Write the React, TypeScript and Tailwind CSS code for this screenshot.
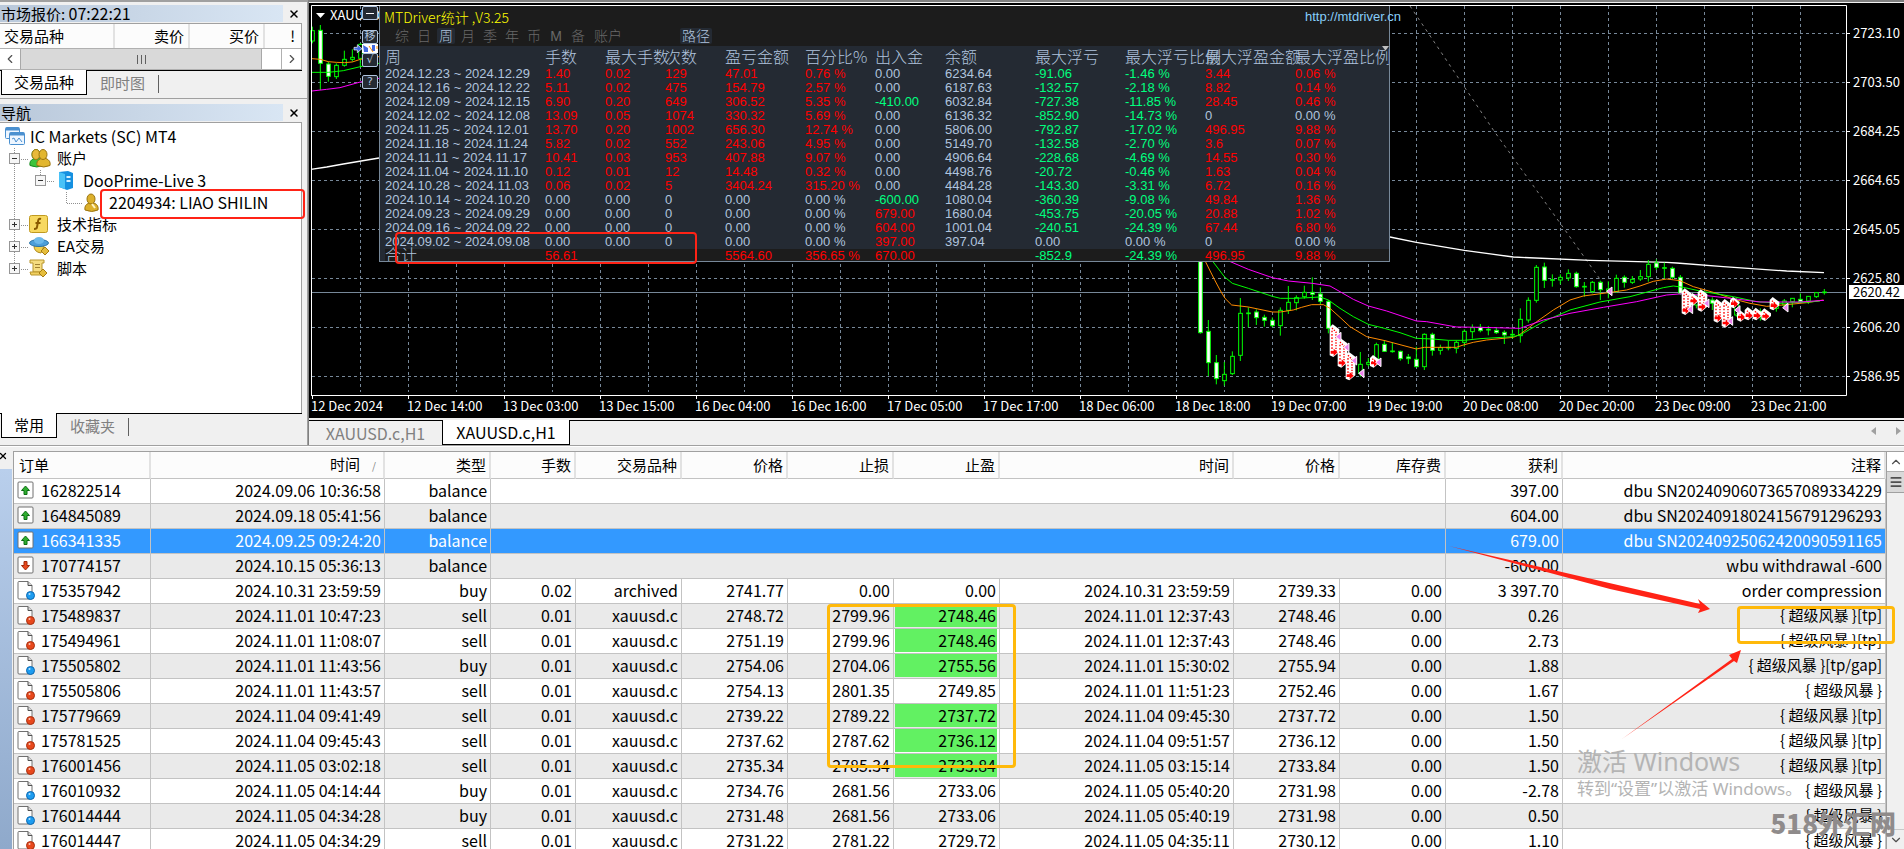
import { clsx } from 'clsx';
import { ChevronDown, ChevronLeft, ChevronRight, ChevronUp, Menu, X } from 'lucide-react';
import type { ReactNode } from 'react';

/* ---------- data ---------- */

const STAT_TABS = ['综', '日', '周', '月', '季', '年', '币', 'M', '备'];

const STAT_HEADERS = [
  '周', '手数', '最大手数', '次数', '盈亏金额', '百分比%', '出入金', '余额',
  '最大浮亏', '最大浮亏比例', '最大浮盈金额', '最大浮盈比例',
];

const STAT_ROWS = [
  ['2024.12.23 ~ 2024.12.29', '1.40', '0.02', '129', '47.01', '0.76 %', '0.00', '6234.64', '-91.06', '-1.46 %', '3.44', '0.06 %'],
  ['2024.12.16 ~ 2024.12.22', '5.11', '0.02', '475', '154.79', '2.57 %', '0.00', '6187.63', '-132.57', '-2.18 %', '8.82', '0.14 %'],
  ['2024.12.09 ~ 2024.12.15', '6.90', '0.20', '649', '306.52', '5.35 %', '-410.00', '6032.84', '-727.38', '-11.85 %', '28.45', '0.46 %'],
  ['2024.12.02 ~ 2024.12.08', '13.09', '0.05', '1074', '330.32', '5.69 %', '0.00', '6136.32', '-852.90', '-14.73 %', '0', '0.00 %'],
  ['2024.11.25 ~ 2024.12.01', '13.70', '0.20', '1002', '656.30', '12.74 %', '0.00', '5806.00', '-792.87', '-17.02 %', '496.95', '9.88 %'],
  ['2024.11.18 ~ 2024.11.24', '5.82', '0.02', '552', '243.06', '4.95 %', '0.00', '5149.70', '-132.58', '-2.70 %', '3.6', '0.07 %'],
  ['2024.11.11 ~ 2024.11.17', '10.41', '0.03', '953', '407.88', '9.07 %', '0.00', '4906.64', '-228.68', '-4.69 %', '14.55', '0.30 %'],
  ['2024.11.04 ~ 2024.11.10', '0.12', '0.01', '12', '14.48', '0.32 %', '0.00', '4498.76', '-20.72', '-0.46 %', '1.63', '0.04 %'],
  ['2024.10.28 ~ 2024.11.03', '0.06', '0.02', '5', '3404.24', '315.20 %', '0.00', '4484.28', '-143.30', '-3.31 %', '6.72', '0.16 %'],
  ['2024.10.14 ~ 2024.10.20', '0.00', '0.00', '0', '0.00', '0.00 %', '-600.00', '1080.04', '-360.39', '-9.08 %', '49.84', '1.36 %'],
  ['2024.09.23 ~ 2024.09.29', '0.00', '0.00', '0', '0.00', '0.00 %', '679.00', '1680.04', '-453.75', '-20.05 %', '20.88', '1.02 %'],
  ['2024.09.16 ~ 2024.09.22', '0.00', '0.00', '0', '0.00', '0.00 %', '604.00', '1001.04', '-240.51', '-24.39 %', '67.44', '6.80 %'],
  ['2024.09.02 ~ 2024.09.08', '0.00', '0.00', '0', '0.00', '0.00 %', '397.00', '397.04', '0.00', '0.00 %', '0', '0.00 %'],
];

const STAT_TOTAL = ['合计', '56.61', '', '', '5564.60', '356.65 %', '670.00', '', '-852.9', '-24.39 %', '496.95', '9.88 %'];

const ORDER_HEADERS = ['时间', '类型', '手数', '交易品种', '价格', '止损', '止盈', '时间', '价格', '库存费', '获利', '注释'];

interface Order {
  id: string;
  time: string;
  type: string;
  // lots, symbol, price, s/l, t/p, close time, close price, swap
  deal?: string[];
  profit: string;
  comment: string;
  hit?: boolean;
  selected?: boolean;
}

const ORDERS: Order[] = [
  { id: '162822514', time: '2024.09.06 10:36:58', type: 'balance', profit: '397.00', comment: 'dbu SN20240906073657089334229' },
  { id: '164845089', time: '2024.09.18 05:41:56', type: 'balance', profit: '604.00', comment: 'dbu SN20240918024156791296293' },
  { id: '166341335', time: '2024.09.25 09:24:20', type: 'balance', profit: '679.00', comment: 'dbu SN20240925062420090591165', selected: true },
  { id: '170774157', time: '2024.10.15 05:36:13', type: 'balance', profit: '-600.00', comment: 'wbu withdrawal -600' },
  { id: '175357942', time: '2024.10.31 23:59:59', type: 'buy', deal: ['0.02', 'archived', '2741.77', '0.00', '0.00', '2024.10.31 23:59:59', '2739.33', '0.00'], profit: '3 397.70', comment: 'order compression' },
  { id: '175489837', time: '2024.11.01 10:47:23', type: 'sell', deal: ['0.01', 'xauusd.c', '2748.72', '2799.96', '2748.46', '2024.11.01 12:37:43', '2748.46', '0.00'], profit: '0.26', comment: '{ 超级风暴 }[tp]', hit: true },
  { id: '175494961', time: '2024.11.01 11:08:07', type: 'sell', deal: ['0.01', 'xauusd.c', '2751.19', '2799.96', '2748.46', '2024.11.01 12:37:43', '2748.46', '0.00'], profit: '2.73', comment: '{ 超级风暴 }[tp]', hit: true },
  { id: '175505802', time: '2024.11.01 11:43:56', type: 'buy', deal: ['0.01', 'xauusd.c', '2754.06', '2704.06', '2755.56', '2024.11.01 15:30:02', '2755.94', '0.00'], profit: '1.88', comment: '{ 超级风暴 }[tp/gap]', hit: true },
  { id: '175505806', time: '2024.11.01 11:43:57', type: 'sell', deal: ['0.01', 'xauusd.c', '2754.13', '2801.35', '2749.85', '2024.11.01 11:51:23', '2752.46', '0.00'], profit: '1.67', comment: '{ 超级风暴 }' },
  { id: '175779669', time: '2024.11.04 09:41:49', type: 'sell', deal: ['0.01', 'xauusd.c', '2739.22', '2789.22', '2737.72', '2024.11.04 09:45:30', '2737.72', '0.00'], profit: '1.50', comment: '{ 超级风暴 }[tp]', hit: true },
  { id: '175781525', time: '2024.11.04 09:45:43', type: 'sell', deal: ['0.01', 'xauusd.c', '2737.62', '2787.62', '2736.12', '2024.11.04 09:51:57', '2736.12', '0.00'], profit: '1.50', comment: '{ 超级风暴 }[tp]', hit: true },
  { id: '176001456', time: '2024.11.05 03:02:18', type: 'sell', deal: ['0.01', 'xauusd.c', '2735.34', '2785.34', '2733.84', '2024.11.05 03:15:14', '2733.84', '0.00'], profit: '1.50', comment: '{ 超级风暴 }[tp]', hit: true },
  { id: '176010932', time: '2024.11.05 04:14:44', type: 'buy', deal: ['0.01', 'xauusd.c', '2734.76', '2681.56', '2733.06', '2024.11.05 05:40:20', '2731.98', '0.00'], profit: '-2.78', comment: '{ 超级风暴 }' },
  { id: '176014444', time: '2024.11.05 04:34:28', type: 'buy', deal: ['0.01', 'xauusd.c', '2731.48', '2681.56', '2733.06', '2024.11.05 05:40:19', '2731.98', '0.00'], profit: '0.50', comment: '{ 超级风暴 }' },
  { id: '176014447', time: '2024.11.05 04:34:29', type: 'sell', deal: ['0.01', 'xauusd.c', '2731.22', '2781.22', '2729.72', '2024.11.05 04:35:11', '2730.12', '0.00'], profit: '1.10', comment: '{ 超级风暴 }' },
];

const DATES = [
  '12 Dec 2024', '12 Dec 14:00', '13 Dec 03:00', '13 Dec 15:00', '16 Dec 04:00', '16 Dec 16:00',
  '17 Dec 05:00', '17 Dec 17:00', '18 Dec 06:00', '18 Dec 18:00', '19 Dec 07:00', '19 Dec 19:00',
  '20 Dec 08:00', '20 Dec 20:00', '23 Dec 09:00', '23 Dec 21:00',
];

const PRICES = ['2723.10', '2703.50', '2684.25', '2664.65', '2645.05', '2625.80', '2606.20', '2586.95'];

// slot, high, low, body top, body bottom, falling (1 = white body)
type Candle = [number, number, number, number, number, number];

const CANDLES: Candle[] = [
  [0, 90, 341, 90, 338, 1], [1, 300, 468, 334, 428, 1], [2, 405, 493, 428, 476, 1], [3, 426, 497, 463, 482, 0],
  [4, 394, 465, 409, 461, 0], [5, 234, 423, 280, 406, 0], [6, 262, 322, 279, 281, 0], [7, 268, 315, 276, 293, 1],
  [8, 284, 320, 292, 301, 1], [9, 292, 322, 301, 317, 1], [10, 262, 347, 271, 317, 0], [11, 198, 282, 247, 271, 0],
  [12, 226, 271, 233, 248, 0], [13, 197, 236, 217, 230, 0], [14, 172, 240, 217, 223, 1], [15, 202, 255, 222, 244, 1],
  [16, 240, 340, 244, 325, 1], [20, 396, 470, 433, 460, 0], [21, 414, 440, 427, 433, 0], [22, 368, 430, 374, 420, 0],
  [23, 362, 396, 373, 394, 1], [24, 368, 398, 393, 395, 0], [25, 392, 422, 394, 416, 1], [26, 402, 432, 411, 416, 1],
  [27, 380, 442, 418, 440, 1], [28, 340, 450, 343, 440, 0], [29, 338, 407, 343, 391, 1], [30, 374, 404, 383, 391, 0],
  [31, 362, 391, 382, 384, 0], [32, 362, 400, 367, 385, 0], [33, 328, 380, 334, 367, 0], [34, 313, 356, 323, 335, 0],
  [35, 312, 337, 322, 332, 1], [36, 318, 346, 328, 330, 0], [37, 321, 342, 331, 338, 1], [38, 331, 372, 337, 345, 1],
  [39, 328, 356, 343, 345, 0], [40, 265, 368, 298, 347, 0], [41, 232, 308, 241, 300, 0], [42, 135, 248, 142, 241, 0],
  [43, 128, 204, 141, 181, 1], [44, 163, 200, 179, 181, 0], [45, 163, 193, 172, 180, 0], [46, 148, 183, 160, 174, 0],
  [47, 155, 203, 160, 200, 1], [48, 186, 230, 199, 201, 0], [49, 183, 220, 187, 215, 0], [50, 182, 240, 187, 209, 1],
  [51, 184, 235, 207, 215, 0], [52, 164, 218, 175, 215, 0], [53, 166, 203, 172, 187, 1], [54, 168, 192, 178, 187, 0],
  [55, 150, 183, 170, 177, 0], [56, 120, 185, 133, 170, 0], [57, 118, 150, 129, 142, 1], [58, 128, 175, 143, 145, 0],
  [59, 140, 177, 145, 172, 1], [60, 165, 225, 172, 220, 1], [62, 225, 265, 240, 255, 0], [64, 232, 270, 240, 250, 1],
  [67, 232, 290, 250, 285, 0], [70, 265, 302, 275, 290, 0], [72, 240, 275, 250, 265, 0], [73, 237, 262, 243, 255, 0],
  [74, 234, 262, 235, 245, 0], [75, 220, 250, 238, 245, 1], [76, 228, 252, 229, 243, 0], [77, 216, 234, 218, 230, 0],
  [78, 207, 224, 216, 218, 0],
];

const EARLY_CANDLES: Candle[] = [
  [-1, 80, 130, 92, 123, 0], [0, 75, 270, 91, 190, 1], [1, 185, 245, 192, 229, 1], [2, 190, 237, 196, 230, 0],
  [3, 152, 200, 178, 196, 0], [4, 148, 185, 172, 178, 0], [5, 130, 200, 133, 175, 0],
];

// x, top, bottom of a pile of entry arrows
const PILES = [
  [462, 316, 408], [486, 358, 440], [510, 398, 478], [583, 408, 440],
  [1518, 208, 282], [1541, 222, 254], [1566, 211, 272], [1614, 240, 305], [1638, 240, 320], [1663, 234, 262],
  [1684, 274, 302], [1707, 264, 298], [1731, 266, 298], [1757, 268, 300], [1782, 234, 268],
];

const EXITS = [
  [477, 350], [501, 382], [524, 422], [546, 460], [597, 427], [1532, 268], [1581, 250], [1652, 303], [1674, 270],
  [1818, 263], [1290, 214],
];

/* ---------- chart ---------- */

const CandleShape = ({ candle }: { candle: Candle }) => {
  const [slot, high, low, top, bottom, falling] = candle;
  const x = 61 + slot * 24;
  return (
    <g stroke="#00ff00" strokeWidth="3">
      <line x1={x} x2={x} y1={high} y2={low} />
      <rect x={x - 5} y={top} width="11" height={bottom - top} fill={falling ? '#fff' : '#000'} />
    </g>
  );
};

const Pile = ({ x, top, bottom }: { x: number; top: number; bottom: number }) => (
  <g>
    <path d={`M${x - 13} ${top + 6}L${x - 4} ${top - 3}L${x + 16} ${top + 12}L${x + 16} ${bottom - 12}L${x - 2} ${bottom + 3}L${x - 13} ${bottom - 2}Z`} fill="#fff" />
    <path d={`M${x - 6} ${top + 8}L${x + 6} ${top + 20}V${bottom - 14}`} stroke="#ff0000" strokeWidth="4" strokeDasharray="4 4" fill="none" />
    <path d={`M${x - 6} ${top + 16}V${bottom - 14}`} stroke="#ff0000" strokeWidth="4" strokeDasharray="5 5" />
    <path d={`M${x - 10} ${bottom - 15}h9v-7l12 11l-12 11v-7h-9z`} fill="#ff0000" />
  </g>
);

const PriceChart = () => (
  <svg className="block h-full w-full" viewBox="309 3 1595 416" preserveAspectRatio="xMinYMin slice" fontFamily="'Noto Sans CJK SC', sans-serif" fontSize="13">
    <g stroke="#778899" strokeDasharray="3 3" shapeRendering="crispEdges">
      {PRICES.map((price, i) => (
        <line key={price} x1="312" x2="1846" y1={33.5 + i * 49} y2={33.5 + i * 49} />
      ))}
      {Array.from({ length: 31 }, (_, i) => (
        <line key={i} x1={360.5 + i * 48} x2={360.5 + i * 48} y1="6" y2="392" />
      ))}
    </g>
    <line x1="312" x2="1846" y1="292.5" y2="292.5" stroke="#778899" />
    <path d="M1410 6L1494 131L1560 223L1602 282" stroke="#808080" strokeDasharray="3 4" fill="none" />

    <g transform="translate(300 0) scale(.33333)" fill="none" strokeWidth="3">
      {EARLY_CANDLES.map((candle) => (
        <CandleShape key={candle[0]} candle={candle} />
      ))}
      <path d="M36 176L61 178L85 185L109 187L133 188L157 186L181 178L237 170" stroke="#ff8c00" />
      <path d="M36 217L85 217L130 212L181 200L237 190" stroke="#00ff00" />
      <path d="M36 273L80 268L120 263L181 246L237 235" stroke="#ff00ff" />
      <path d="M33 508L80 501L130 492L237 474" stroke="#fff" strokeWidth="4" />
      <path d="M162 142h10v-8l14 12l-14 12v-8h-10z" fill="#4169e1" stroke="#fff" strokeWidth="2" />
    </g>

    <g transform="translate(1180 220) scale(.33333)" fill="none" strokeWidth="3">
      <path d="M630 51L709 67L853 91L1000 111L1230 121L1460 127L1490 129L1630 140L1820 153L1932 158" stroke="#fff" strokeWidth="4" />
      {CANDLES.map((candle) => (
        <CandleShape key={candle[0]} candle={candle} />
      ))}
      <path d="M72 116L103 178L120 210L135 235L155 255L205 261L277 276L301 276L340 270L365 262L395 254L430 254L450 265L480 292L510 320L560 350L615 362L660 374L709 387L733 382L829 382L850 375L880 367L920 360L1000 352L1020 343L1070 305L1120 270L1170 240L1210 228L1285 218L1340 210L1380 198L1420 184L1460 177L1500 182L1540 200L1600 217L1660 237L1710 250L1760 259L1820 254L1880 248L1930 240" stroke="#ff8c00" />
      <path d="M92 116L133 170L157 190L205 205L277 229L301 235L349 235L421 231L445 240L480 265L520 290L565 313L613 325L660 338L709 355L757 357L805 361L853 361L900 356L1000 350L1020 345L1090 305L1170 270L1260 246L1350 230L1450 203L1480 198L1510 202L1560 213L1660 230L1730 245L1800 250L1890 246L1920 243" stroke="#00ff00" />
      <path d="M130 116L205 148L277 173L325 183L397 190L450 198L480 215L520 238L565 258L620 273L709 303L740 305L829 321L900 322L1020 325L1090 300L1170 280L1270 262L1370 245L1460 225L1510 221L1580 227L1660 236L1740 246L1860 246L1932 241" stroke="#ff00ff" />
      {PILES.map(([x, top, bottom]) => (
        <Pile key={x} x={x} top={top} bottom={bottom} />
      ))}
      {EXITS.map(([x, y]) => (
        <path key={x} d={`M${x - 10} ${y}l16 -13v26z`} fill="#ee82ee" stroke="#fff" />
      ))}
    </g>

    <path d="M311.5 396V5.5H1846.5V395.5H311.5" stroke="#fff" fill="none" />
    <g fill="#fff">
      {PRICES.map((price, i) => (
        <text key={price} x="1853" y={38 + i * 49}>{price}</text>
      ))}
      {DATES.map((date, i) => (
        <text key={date} x={311 + i * 96} y="411">{date}</text>
      ))}
      {PRICES.map((price, i) => (
        <rect key={price} x="1847" y={33 + i * 49} width="3" height="1" />
      ))}
      {DATES.map((date, i) => (
        <rect key={date} x={312 + i * 96} y="396" width="1" height="3" />
      ))}
      <rect x="1849" y="285" width="55" height="14" />
      <path d="M316 13h9l-4.500 5z" />
      <text x="330" y="20">XAUUSD.c,H1</text>
    </g>
    <text x="1853" y="297" fill="#000">2620.42</text>
  </svg>
);

/* ---------- statistics overlay ---------- */

const statColor = (col: number, value: string) => {
  if (col === 0 || col === 7 || parseFloat(value) === 0) return 'text-[#b0c4de]';
  return value.startsWith('-') ? 'text-[#00ff7f]' : 'text-[#ff0000]';
};

const StatRow = ({ cells, total }: { cells: string[]; total?: boolean }) => (
  <tr className={clsx('h-[14px]', total && 'bg-[#1c1c1c]')}>
    {cells.map((value, col) => (
      <td key={col} className={clsx('p-0', statColor(col, value), total && col === 0 && 'text-base leading-[14px] font-light')}>
        {value}
      </td>
    ))}
  </tr>
);

const StatsPanel = () => (
  <section className="absolute top-[3px] left-[70px] h-[256px] w-[1011px] overflow-hidden border-r border-b border-l border-[#778899] bg-[#242a33] font-['Liberation_Sans','Noto_Sans_CJK_SC',sans-serif]">
    <div className="h-10 bg-[#1c1c1c] pt-px pl-1">
      <h2 className="h-[21px] font-['Noto_Sans_CJK_SC',sans-serif] text-sm leading-5 font-light text-[#ffff00]">MTDriver统计 ,V3.25</h2>
      <div className="flex h-4 items-center pl-[9px] text-sm leading-4 font-light text-[#696969]">
        {STAT_TABS.map((tab) => (
          <button key={tab} className={clsx('mr-1 w-[18px]', tab === '周' && 'rounded-xs bg-[#242a33] text-[#b0c4de]')}>
            {tab}
          </button>
        ))}
        <button className="ml-px w-8">账户</button>
        <button className="ml-14 w-8 rounded-xs bg-[#242a33] text-[#b0c4de]">路径</button>
      </div>
    </div>
    <table className="ml-[5px] w-[1005px] table-fixed border-separate border-spacing-0 text-left text-[13px] leading-[14px] whitespace-nowrap">
      <colgroup>
        <col className="w-[160px]" />
        <col className="w-[60px]" />
        <col className="w-[60px]" />
        <col className="w-[60px]" />
        <col className="w-[80px]" />
        <col className="w-[70px]" />
        <col className="w-[70px]" />
        <col className="w-[90px]" />
        <col className="w-[90px]" />
        <col className="w-[80px]" />
        <col className="w-[90px]" />
        <col />
      </colgroup>
      <thead>
        <tr className="h-[21px]">
          {STAT_HEADERS.map((header) => (
            <th key={header} className="p-0 font-['Noto_Sans_CJK_SC',sans-serif] text-base leading-[21px] font-light text-[#b0c4de]">{header}</th>
          ))}
        </tr>
      </thead>
      <tbody>
        {STAT_ROWS.map((row) => (
          <StatRow key={row[0]} cells={row} />
        ))}
        <StatRow cells={STAT_TOTAL} total />
      </tbody>
    </table>
  </section>
);

const ToolButton = ({ children, label }: { children: ReactNode; label: string }) => (
  <button aria-label={label} className="flex h-[14px] w-4 items-center justify-center rounded-xs border border-[#b0c4de] bg-[#242a33] font-['DejaVu_Sans','Noto_Sans_CJK_SC',sans-serif] text-[11px] leading-3 text-[#b0c4de]">
    {children}
  </button>
);

const ChartArea = () => (
  <div className="relative min-h-0 flex-1 overflow-hidden bg-black">
    <PriceChart />
    <StatsPanel />
    <div className="absolute top-[3px] left-[53px] flex flex-col">
      <ToolButton label="最小化">
        <span className="h-px w-2 bg-white" />
      </ToolButton>
      <div className="mt-[10px] flex flex-col">
        <ToolButton label="移动">移</ToolButton>
        <svg className="h-[9px] w-4" viewBox="0 0 16 9" aria-hidden="true">
          <rect width="16" height="9" fill="#fff" />
          <path d="M1 1l5 3v4H2zM10 1h3v6h-3z" fill="#4169e1" />
          <path d="M7 2l4 6M15 2v3" stroke="#ff8c00" />
        </svg>
        <ToolButton label="确认">√</ToolButton>
      </div>
      <div className="mt-2 flex flex-col">
        <ToolButton label="帮助">?</ToolButton>
      </div>
    </div>
    <a href="http://mtdriver.cn" className="absolute top-[6px] left-[996px] font-['Liberation_Sans',sans-serif] text-[13px] leading-4 text-[#87cefa]">
      http://mtdriver.cn
    </a>
    <svg className="absolute top-[43px] left-[1073px] h-1 w-[7px]" viewBox="0 0 7 4" aria-hidden="true">
      <path d="M0 0h7l-3 4h-1z" fill="#c0c0c0" />
    </svg>
    <div className="absolute top-[229px] left-[86px] h-8 w-[302px] rounded-sm border-2 border-[#ff2316]" />
  </div>
);

/* ---------- left column ---------- */

const PanelTitle = ({ children }: { children: ReactNode }) => (
  <div className="flex h-[17px] items-center">
    <h2 className="h-full flex-1 bg-linear-to-r from-[#b9c8da] to-[#d9e6f4] pl-px text-[15px] leading-[17px]">{children}</h2>
    <button aria-label="关闭" className="flex w-[19px] justify-end pr-[2px]">
      <X size={12} strokeWidth={3} />
    </button>
  </div>
);

const PanelTabs = ({ active, other }: { active: string; other: string }) => (
  <div className="flex h-7 border-t border-black text-[15px] leading-[22px]">
    <button className="-mt-px ml-px h-[25px] border-x border-b border-black bg-white px-3">{active}</button>
    <button className="h-[23px] px-[13px] text-[#808080]">{other}</button>
    <span className="mt-1 h-[18px] w-px bg-[#606060]" />
  </div>
);

const MarketWatch = () => (
  <section>
    <PanelTitle>
      市场报价: <span className="text-base leading-[17px]">07:22:21</span>
    </PanelTitle>
    <div className="mt-px border-t border-r border-[#a0a0a0] bg-white">
      <table className="w-full table-fixed border-separate border-spacing-0 text-[15px] leading-6">
        <thead>
          <tr className="bg-[#fcfcfc] text-right">
            <th className="w-[115px] border-r-2 border-[#e2e2e2] p-0 pl-1 text-left font-normal">交易品种</th>
            <th className="w-[75px] border-r-2 border-[#e2e2e2] p-0 pr-1 font-normal">卖价</th>
            <th className="w-[75px] border-r-2 border-[#e2e2e2] p-0 pr-1 font-normal">买价</th>
            <th className="p-0 pr-1.5 font-normal">!</th>
          </tr>
        </thead>
      </table>
      <div className="flex h-[22px] border-y border-[#b0b0b0]">
        <button aria-label="向左" className="flex w-5 items-center justify-center text-[#505050]">
          <ChevronLeft size={14} />
        </button>
        <div className="flex w-[242px] items-center justify-center gap-[3px] border-x border-[#a8a8a8] bg-[#d9d9d9]">
          <span className="h-[9px] w-px bg-[#606060]" />
          <span className="h-[9px] w-px bg-[#606060]" />
          <span className="h-[9px] w-px bg-[#606060]" />
        </div>
        <button aria-label="向右" className="ml-auto flex w-5 items-center justify-center border-l border-[#b0b0b0] text-[#505050]">
          <ChevronRight size={14} />
        </button>
      </div>
    </div>
    <PanelTabs active="交易品种" other="即时图" />
  </section>
);

const Expander = ({ open }: { open?: boolean }) => (
  <button aria-label={open ? '折叠' : '展开'} className="h-[11px] w-[11px] border border-[#969696] bg-[#f6f6f6]">
    <svg className="h-[9px] w-[9px]" viewBox="0 0 9 9">
      <path d={open ? 'M2 4.500h5' : 'M2 4.500h5M4.500 2v5'} stroke="#303030" />
    </svg>
  </button>
);

const PersonShape = ({ x, fill, stroke }: { x: number; fill: string; stroke: string }) => (
  <g fill={fill} stroke={stroke}>
    <path d={`M${x} 17q-1 -5 4 -7h5q5 2 4 7q-6 3 -13 0z`} />
    <ellipse cx={x + 6} cy="6" rx="4" ry="5" />
  </g>
);

const TerminalIcon = () => (
  <svg className="h-[18px] w-5" viewBox="0 0 20 18" fill="#eef6ff" stroke="#4a90d0">
    <rect x=".5" y=".5" width="14" height="11" rx="1" />
    <path d="M1 2h13" strokeWidth="3" />
    <rect x="4.500" y="5.500" width="15" height="12" rx="1" />
    <path d="M5 7h14" strokeWidth="3" />
    <path d="M7 12l2 -1l2 4l3 -4l3 4" fill="none" />
  </svg>
);

const AccountsIcon = () => (
  <svg className="h-[20px] w-[22px]" viewBox="0 0 22 19">
    <PersonShape x={1} fill="#3cc43c" stroke="#168a20" />
    <ellipse cx="7" cy="6" rx="4" ry="5" fill="#e8b93a" stroke="#a87c10" />
    <PersonShape x={8} fill="#e2b62e" stroke="#9a7410" />
  </svg>
);

const ServerIcon = () => (
  <svg className="h-[19px] w-4" viewBox="0 0 16 19">
    <path d="M1 1l9 -1l5 2v15l-6 2l-8 -3z" fill="#1590e0" />
    <path d="M1 1l6 2v15l-6 -2z" fill="#49c2f7" />
    <path d="M8.500 5h4v2h-4zM8.500 9h4v2h-4z" fill="#d8f2ff" />
  </svg>
);

const AccountIcon = () => (
  <svg className="h-[19px] w-4" viewBox="0 0 16 19">
    <PersonShape x={1} fill="#dcb02c" stroke="#9a7410" />
    <path d="M8 11l3 4" stroke="#fff3c0" strokeWidth="2" />
  </svg>
);

const IndicatorIcon = () => (
  <svg className="h-[18px] w-[19px]" viewBox="0 0 19 18" fill="none">
    <rect x=".5" y=".5" width="18" height="17" rx="2" fill="#f7d860" stroke="#c09a20" />
    <path d="M12 4q-3 -1 -3 3l-1 5q0 2 -3 2M6.500 8h5" stroke="#8a5a00" strokeWidth="2" />
  </svg>
);

const ExpertIcon = () => (
  <svg className="h-[18px] w-[21px]" viewBox="0 0 21 18">
    <path d="M5 9q0 6 7 7l3 -7z" fill="#f0cf50" stroke="#b08a20" />
    <ellipse cx="10" cy="6" rx="9.500" ry="3.500" fill="#4d9ed8" stroke="#2a74a8" />
    <ellipse cx="10" cy="3.500" rx="5" ry="3.500" fill="#6db9ea" />
    <path d="M16 10l4 4l-4 4l-4 -4z" fill="#e5bd3c" stroke="#a87c10" />
  </svg>
);

const ScriptIcon = () => (
  <svg className="h-[18px] w-[19px]" viewBox="0 0 19 18">
    <path d="M1 1h14v3h-2v9H4v-9H1z" fill="#f5dc80" stroke="#b8952c" />
    <path d="M1 13h12v3H2z" fill="#f0cf60" stroke="#b8952c" />
    <path d="M6 5.500h5M6 8.500h5" stroke="#a08030" />
    <path d="M14 10l4 4l-4 4l-4 -4z" fill="#e5bd3c" stroke="#a87c10" />
  </svg>
);

const Navigator = () => (
  <section className="flex min-h-0 flex-1 flex-col">
    <PanelTitle>导航</PanelTitle>
    <div className="relative mt-px flex-1 border-t border-r border-[#a0a0a0] bg-white pt-[2px] text-base leading-[22px]">
      <svg className="absolute top-px left-0 h-[160px] w-[110px]" viewBox="0 0 110 160" stroke="#909090" strokeDasharray="1 1" fill="none" aria-hidden="true">
        <path d="M14.500 24V146M15 35.500H28M15 101.500H28M15 123.500H28M15 145.500H28M40.500 46V57.500H54M66.500 68V79.500H82" />
      </svg>
      <ul className="relative">
        <li className="flex h-[22px] items-center gap-[5px] pl-[5px]">
          <TerminalIcon />
          IC Markets (SC) MT4
        </li>
        <li className="flex h-[22px] items-center pl-[9px]">
          <Expander open />
          <span className="ml-[9px] flex w-7"><AccountsIcon /></span>
          <span className="text-[15px]">账户</span>
        </li>
        <li className="flex h-[22px] items-center pl-[35px]">
          <Expander open />
          <span className="ml-3 flex w-[25px]"><ServerIcon /></span>
          DooPrime-Live 3
        </li>
        <li className="flex h-[22px] items-center gap-[9px] pl-[84px]">
          <AccountIcon />
          2204934: LIAO SHILIN
        </li>
        <li className="flex h-[22px] items-center pl-[9px]">
          <Expander />
          <span className="ml-[9px] flex w-7"><IndicatorIcon /></span>
          <span className="text-[15px]">技术指标</span>
        </li>
        <li className="flex h-[22px] items-center pl-[9px]">
          <Expander />
          <span className="ml-[9px] flex w-7"><ExpertIcon /></span>
          <span className="text-[15px]">EA交易</span>
        </li>
        <li className="flex h-[22px] items-center pl-[9px]">
          <Expander />
          <span className="ml-[9px] flex w-7"><ScriptIcon /></span>
          <span className="text-[15px]">脚本</span>
        </li>
      </ul>
      <div className="absolute top-[66px] left-[100px] h-[30px] w-[205px] rounded-sm border-2 border-[#ff2316]" />
    </div>
    <PanelTabs active="常用" other="收藏夹" />
  </section>
);

/* ---------- terminal ---------- */

const OrderIcon = ({ type, profit }: { type: string; profit: string }) => {
  if (type === 'balance') {
    const out = profit.startsWith('-');
    return (
      <svg className="h-[18px] w-[18px] shrink-0" viewBox="0 0 18 18">
        <rect x="1" y="1" width="15" height="16" rx="1" fill="#fff" stroke="#707070" />
        <path
          d={out ? 'M8.500 14l-4 -4.500h2.500v-4h3v4h2.500z' : 'M8.500 5l-4 4.500h2.500v4h3v-4h2.500z'}
          fill={out ? '#e8481c' : '#2fae2f'}
          stroke={out ? '#a02808' : '#0d6e14'}
        />
      </svg>
    );
  }
  const sell = type === 'sell';
  return (
    <svg className="h-[19px] w-[18px] shrink-0" viewBox="0 0 18 19">
      <path d="M1 1.500q0 -1 1 -1h9l4 4v12.500q0 1 -1 1H2q-1 0 -1 -1z" fill="#fff" stroke="#707070" />
      <path d="M11 .5v4h4" fill="#d8d8d8" stroke="#505050" />
      <circle cx="13.500" cy="14.500" r="4" fill={sell ? '#e8481c' : '#1c9cf0'} stroke={sell ? '#a83010' : '#0c68b0'} />
      <circle cx="12.500" cy="13" r="1" fill="#fff" opacity=".7" />
    </svg>
  );
};

const cellClass = 'h-[25px] border-r border-b border-[#c3c3c3] pt-0 pb-[2px] pl-0 pr-[3px]';

const OrderRow = ({ order, striped }: { order: Order; striped: boolean }) => (
  <tr className={clsx(order.selected ? 'bg-[#3399ff] text-white' : striped ? 'bg-[#eaeaea]' : 'bg-white')}>
    <td className={cellClass}>
      <div className="flex items-center gap-[6px] pl-[3px]">
        <OrderIcon type={order.type} profit={order.profit} />
        {order.id}
      </div>
    </td>
    <td className={cellClass}>{order.time}</td>
    <td className={cellClass}>{order.type}</td>
    {order.deal ? (
      order.deal.map((value, i) =>
        i === 4 && order.hit ? (
          <td key={i} className="h-[25px] border-r border-b border-[#c3c3c3] p-0">
            <div className="mr-[2px] mb-px ml-px h-[23px] bg-[#62f162] pr-px">{value}</div>
          </td>
        ) : (
          <td key={i} className={cellClass}>{value}</td>
        ),
      )
    ) : (
      <td colSpan={8} className={cellClass} />
    )}
    <td className={cellClass}>{order.profit}</td>
    <td className={clsx(cellClass, order.comment.startsWith('{') && 'text-[15px] leading-[22px]')}>{order.comment}</td>
  </tr>
);

const OrdersTable = () => (
  <table className="w-full table-fixed border-separate border-spacing-0 text-right text-base leading-[22px] whitespace-nowrap">
    <colgroup>
      <col className="w-[137px]" />
      <col className="w-[234px]" />
      <col className="w-[106px]" />
      <col className="w-[85px]" />
      <col className="w-[106px]" />
      <col className="w-[106px]" />
      <col className="w-[106px]" />
      <col className="w-[106px]" />
      <col className="w-[234px]" />
      <col className="w-[106px]" />
      <col className="w-[106px]" />
      <col className="w-[117px]" />
      <col />
    </colgroup>
    <thead>
      <tr className="bg-[#fcfcfc] text-[15px]">
        <th className="h-[27px] border-r-2 border-b border-r-[#e2e2e2] border-b-[#c3c3c3] p-0 pl-[5px] text-left font-normal">订单</th>
        {ORDER_HEADERS.map((header, i) => (
          <th key={i} className="h-[27px] border-r-2 border-b border-r-[#e2e2e2] border-b-[#c3c3c3] p-0 pr-[3px] font-normal">
            {header}
            {i === 0 && <span className="mr-1 ml-3 text-[10px] text-[#808080]">/</span>}
          </th>
        ))}
      </tr>
    </thead>
    <tbody>
      {ORDERS.map((order, i) => (
        <OrderRow key={order.id} order={order} striped={i % 2 === 1} />
      ))}
    </tbody>
  </table>
);

const Terminal = () => (
  <section className="relative flex min-h-0 flex-1 overflow-hidden border-t border-white pt-1">
    <div className="flex w-[13px] flex-col">
      <button aria-label="关闭" className="flex h-[18px] w-3 items-start">
        <X size={10} strokeWidth={3} className="-ml-[2px]" />
      </button>
      <div className="w-3 flex-1 bg-linear-to-b from-[#b9cfec] to-[#8fa9cb]" />
    </div>
    <div className="min-w-0 flex-1 overflow-hidden border-t border-l border-[#a0a0a0] bg-white">
      <OrdersTable />
    </div>
    <div className="flex w-[18px] flex-col border-t border-l border-[#a0a0a0] bg-[#f0f0f0] text-[#505050]">
      <button aria-label="向上" className="flex h-5 items-center justify-center border-b border-[#b0b0b0] bg-white">
        <ChevronUp size={14} />
      </button>
      <div className="flex h-[21px] items-center justify-center border-b border-[#a0a0a0] bg-[#d9d9d9]">
        <Menu size={14} strokeWidth={3} />
      </div>
      <button aria-label="向下" className="mt-auto flex h-5 items-center justify-center border-t border-[#c8c8c8]">
        <ChevronDown size={14} />
      </button>
    </div>

    <div className="absolute top-[157px] left-[827px] h-[164px] w-[189px] rounded-sm border-[3px] border-[#ffb90a]" />
    <div className="absolute top-[159px] right-[9px] h-[38px] w-[158px] rounded-sm border-[3px] border-[#ffb90a]" />
    <svg className="absolute top-[90px] right-[154px] h-[210px] w-[320px]" viewBox="0 0 320 210" fill="#ff2316" aria-hidden="true">
      <path d="M19 9L270 67L268 62L280 72L268 76L270 72L180 52Z" />
      <path d="M192 202L302 122L299 118L311 113L307 126L304 124L235 172Z" />
    </svg>
    <div className="absolute right-[93px] bottom-[49px] w-[234px] font-['Noto_Sans','Noto_Sans_CJK_SC',sans-serif] text-[17px] leading-[22px] whitespace-nowrap text-[#b4b4b4]">
      <p className="text-[25px] leading-[34px]">激活 Windows</p>
      <p>转到“设置”以激活 Windows。</p>
    </div>
    <p className="absolute right-2 bottom-[6px] text-[26px] leading-10 font-black text-[#8f8b8b]">518外汇网</p>
  </section>
);

export default function App() {
  return (
    <main className="flex h-screen flex-col overflow-hidden bg-[#f0f0f0] font-['Noto_Sans_CJK_SC',sans-serif] text-black">
      <div className="flex h-[446px] shrink-0 border-b border-[#a0a0a0]">
        <div className="flex w-[308px] shrink-0 flex-col border-t-2 border-r border-[#a0a0a0]">
          <div className="border-b border-[#a0a0a0] pt-[3px] pr-[5px]">
            <MarketWatch />
          </div>
          <div className="flex min-h-0 flex-1 flex-col pt-[5px] pr-[5px] pb-1">
            <Navigator />
          </div>
        </div>
        <div className="flex min-w-0 flex-1 flex-col border-t-2 border-l border-[#808080] pt-px">
          <ChartArea />
          <div className="mt-[2px] flex h-[25px] items-start border-t border-black text-base leading-[23px]">
            <button className="h-6 w-[133px] text-[#808080]">XAUUSD.c,H1</button>
            <button className="-mt-px h-[25px] w-[128px] border-x border-b border-black bg-white">XAUUSD.c,H1</button>
            <span className="mt-1.5 mr-[3px] ml-auto flex gap-[20px]">
              <button aria-label="上一个">
                <svg className="h-2 w-[5px]" viewBox="0 0 5 8"><path d="M5 0v8l-5 -4z" fill="#a0a0a0" /></svg>
              </button>
              <button aria-label="下一个">
                <svg className="h-2 w-[5px]" viewBox="0 0 5 8"><path d="M0 0v8l5 -4z" fill="#a0a0a0" /></svg>
              </button>
            </span>
          </div>
        </div>
      </div>
      <Terminal />
    </main>
  );
}
